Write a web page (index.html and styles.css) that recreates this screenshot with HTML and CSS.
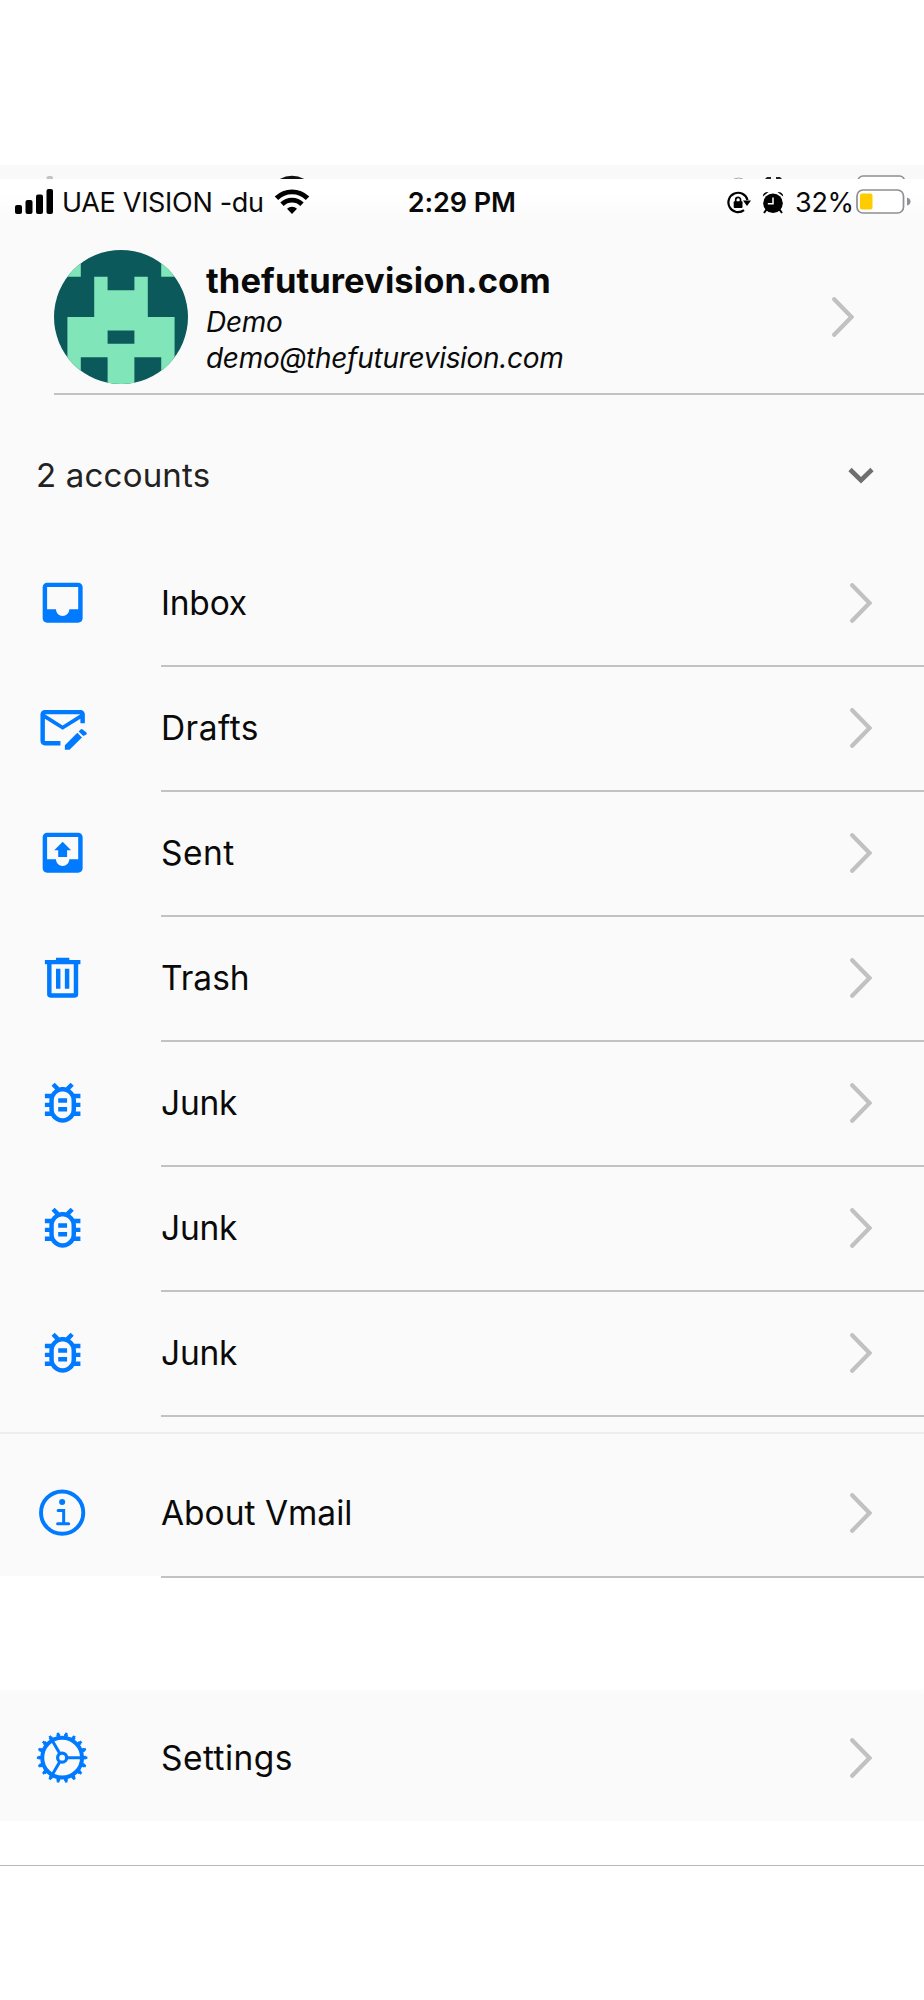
FILE: index.html
```html
<!DOCTYPE html>
<html lang="en">
<head>
<meta charset="utf-8">
<title>Vmail</title>
<link rel="stylesheet" href="styles.css">
</head>
<body>
<svg class="defs" width="0" height="0" aria-hidden="true">
  <defs>
    <symbol id="chevron" viewBox="0 0 22 40"><path d="M2.200 2.200 L19.500 20 L2.200 37.800" fill="none" stroke="#c1c1c1" stroke-width="4.200" stroke-linecap="round" stroke-linejoin="miter"/></symbol>
    <symbol id="bug" viewBox="0 0 24 24"><path d="M20 8h-2.810c-.45-.78-1.070-1.450-1.820-1.960L17 4.410 15.590 3l-2.170 2.170C12.960 5.060 12.490 5 12 5s-.96.06-1.410.17L8.410 3 7 4.410l1.620 1.630C7.880 6.550 7.260 7.220 6.810 8H4v2h2.090c-.05.33-.09.66-.09 1v1H4v2h2v1c0 .34.04.67.09 1H4v2h2.810c1.040 1.790 2.970 3 5.190 3s4.150-1.210 5.190-3H20v-2h-2.090c.05-.33.09-.66.09-1v-1h2v-2h-2v-1c0-.34-.04-.67-.09-1H20V8zm-4 4v3c0 .22-.03.47-.07.7l-.1.65-.37.65c-.72 1.240-2.040 2-3.460 2s-2.740-.77-3.460-2l-.37-.64-.1-.65C8.030 15.480 8 15.230 8 15v-4c0-.23.03-.48.07-.7l.1-.65.37-.65c.3-.52.72-.97 1.210-1.310l.57-.39.74-.18c.31-.08.63-.12.94-.12.32 0 .63.04.95.12l.68.16.61.42c.5.34.91.78 1.210 1.310l.38.65.1.65c.04.22.07.47.07.69v1zm-6 2h4v2h-4zm0-4h4v2h-4z"/></symbol>
  </defs>
</svg>

<div class="strip">
  <svg viewBox="0 0 924 14" width="924" height="14">
    <rect x="46.500" y="11" width="6.500" height="5" rx="2" fill="#c4c4c4"/>
    <path d="M278 15 Q292 6.500 306 15Z" fill="#111"/>
    <path d="M765 14l2-2h4v2zM776 14v-2h4l2 2z" fill="#222"/>
    <path d="M734 14q5-2 9 0" stroke="#aaa" fill="none"/>
    <rect x="858" y="11" width="46.500" height="20" rx="5" fill="#fff" stroke="#8e8e93" stroke-width="1.600"/>
  </svg>
</div>

<header class="status">
  <svg class="signal" viewBox="0 0 38 25" width="38" height="25"><rect x="0" y="16" width="7" height="9" rx="2"/><rect x="10.500" y="11" width="7" height="14" rx="2"/><rect x="21" y="5.500" width="7" height="19.500" rx="2"/><rect x="31.500" y="0" width="6.500" height="25" rx="2"/></svg>
  <span class="carrier">UAE VISION -du</span>
  <svg class="wifi" viewBox="0 0 34 25" width="34" height="25"><g fill="none" stroke="#000" stroke-width="4.800"><path d="M1.500 9.200a22 22 0 0 1 31 0"/><path d="M7 15.200a14.200 14.200 0 0 1 20 0"/></g><path d="M17 25l-5-5.200a7 7 0 0 1 10 0z"/></svg>
  <span class="clock">2:29 PM</span>
  <svg class="lock" viewBox="0 0 24 23" width="24" height="23"><g fill="none" stroke="#000" stroke-width="2.200"><path d="M20.500 9A9.700 9.700 0 1 0 17 19.200"/><path d="M8.700 11V8.700a2.400 2.400 0 0 1 4.800 0V11" stroke-width="1.700"/></g><rect x="6.700" y="10.300" width="8.800" height="6.800" rx="1"/><path d="M16 9.500h8l-4 5.500z"/></svg>
  <svg class="alarm" viewBox="0 0 22 23" width="22" height="23"><circle cx="11" cy="12.200" r="9.800"/><path d="M.8 5.500Q1 .8 6.500 1zM21.200 5.500Q21 .8 15.500 1z"/><path d="M4.500 18.500l-2.500 3.500M17.500 18.500l2.500 3.500" stroke="#000" stroke-width="2"/><path d="M11 6.500v6.200H5.800" fill="none" stroke="#fff" stroke-width="1.500"/></svg>
  <span class="percent">32%</span>
  <svg class="battery" viewBox="0 0 55 25" width="55" height="25"><rect x="1" y="1" width="46.500" height="23" rx="6" fill="#fff" stroke="#8e8e93" stroke-width="1.700"/><rect x="4" y="4.500" width="12.500" height="16" rx="2" fill="#fc0"/><path d="M51 8.500q3.500 1 3.500 4t-3.500 4z" fill="#8e8e93"/></svg>
</header>

<main>
  <section class="profile">
    <svg class="avatar" viewBox="0 0 10 10" width="134" height="134"><clipPath id="round"><circle cx="5" cy="5" r="5"/></clipPath><g clip-path="url(#round)"><path fill="#0b595b" d="M0 0h10v10H0z"/><path fill="#80e5b8" fill-rule="evenodd" d="M0 0h2v2H0zM8 0h2v2H8zM3 2h1v1h2V2h1v3h2v5H8V8H6v2H4V8H2v2H1V5h2zM4 6v1h2V6z"/></g></svg>
    <div class="who">
      <div class="name">thefuturevision.com</div>
      <div class="demo">Demo</div>
      <div class="email">demo@thefuturevision.com</div>
    </div>
    <svg class="go" width="22" height="40"><use href="#chevron"/></svg>
  </section>

  <section class="accounts">
    <span class="count">2 accounts</span>
    <svg width="26" height="17" viewBox="0 0 26 17"><path d="M2 2.500 L13 13.200 L24 2.500" fill="none" stroke="#6f6f6f" stroke-width="4.600"/></svg>
  </section>

  <nav class="folders">
    <a class="row"><svg class="icon" viewBox="0 0 24 24"><path d="M19 3H5c-1.100 0-2 .9-2 2v14c0 1.100.9 2 2 2h14c1.100 0 2-.9 2-2V5c0-1.100-.9-2-2-2zm0 12h-4c0 1.660-1.350 3-3 3s-3-1.340-3-3H5V5h14v10z"/></svg><span class="cell"><span class="snug">Inbox</span><svg class="go" width="22" height="40"><use href="#chevron"/></svg></span></a>
    <a class="row"><svg class="icon" viewBox="0 0 24 24"><path fill-rule="evenodd" d="M11 20H4c-1.100 0-2-.9-2-2V6c0-1.100.9-2 2-2h16c1.100 0 2 .9 2 2v4h-2V8l-8 5-8-5v10h7zM4 6l8 5 8-5z"/><path d="M13 22v-2.100l5.600-5.600 2.100 2.100L15.100 22zM21.300 15.800l-2.100-2.100.9-.9q.4-.4.900 0l1.700 1.400q.4.400 0 .9z"/></svg><span class="cell"><span class="wide">Drafts</span><svg class="go" width="22" height="40"><use href="#chevron"/></svg></span></a>
    <a class="row"><svg class="icon" viewBox="0 0 24 24"><path d="M19 3H5c-1.100 0-2 .9-2 2v14c0 1.100.9 2 2 2h14c1.100 0 2-.9 2-2V5c0-1.100-.9-2-2-2zm0 12h-4c0 1.660-1.350 3-3 3s-3-1.340-3-3H5V5h14v10zM10 14h4v-3.100h1.800L12 7.100l-3.800 3.800H10z"/></svg><span class="cell"><span class="wide">Sent</span><svg class="go" width="22" height="40"><use href="#chevron"/></svg></span></a>
    <a class="row"><svg class="icon" viewBox="0 0 24 24"><path fill-rule="evenodd" d="M4 4h5V3h6v1h5v2h-1v13.500q0 1.500-1.500 1.500h-11Q5 21 5 19.500V6H4zM7 6v13h10V6zM9 8h2v9H9zM13 8h2v9h-2z"/></svg><span class="cell"><span>Trash</span><svg class="go" width="22" height="40"><use href="#chevron"/></svg></span></a>
    <a class="row"><svg class="icon"><use href="#bug"/></svg><span class="cell"><span class="snug">Junk</span><svg class="go" width="22" height="40"><use href="#chevron"/></svg></span></a>
    <a class="row"><svg class="icon"><use href="#bug"/></svg><span class="cell"><span class="snug">Junk</span><svg class="go" width="22" height="40"><use href="#chevron"/></svg></span></a>
    <a class="row"><svg class="icon"><use href="#bug"/></svg><span class="cell"><span class="snug">Junk</span><svg class="go" width="22" height="40"><use href="#chevron"/></svg></span></a>
  </nav>

  <section class="about">
    <a class="row"><svg class="icon" viewBox="0 0 53 53"><g fill="none" stroke="#007aff"><circle cx="26" cy="26.500" r="21" stroke-width="3.900"/><path d="M22 24.300h5.500v13M21.500 37.500h11" stroke-width="3" stroke-linecap="round"/></g><circle cx="26" cy="16" r="3"/></svg><span class="cell"><span>About Vmail</span><svg class="go" width="22" height="40"><use href="#chevron"/></svg></span></a>
  </section>
</main>

<section class="settings">
  <a class="row"><svg class="icon" viewBox="0 0 53 53"><g fill="none" stroke="#007aff"><circle cx="26" cy="26.500" r="19.800" stroke-width="4"/><circle cx="26" cy="26.500" r="22.300" stroke-width="2.600" pathLength="180" stroke-dasharray="4.800 5.200" stroke-dashoffset="2.400"/><circle cx="26" cy="26.500" r="24" stroke-width="2.200" pathLength="180" stroke-dasharray="3 7" stroke-dashoffset="1.500"/><circle cx="26" cy="26.500" r="4.500" stroke-width="3.200"/><path d="M31 26.500h15M23.500 22.200l-7.500-13M23.500 30.800l-7.500 13" stroke-width="3"/></g></svg><span class="cell"><span class="wide">Settings</span><svg class="go" width="22" height="40"><use href="#chevron"/></svg></span></a>
</section>
<footer class="end"></footer>
</body>
</html>
```

FILE: styles.css
```css
* { box-sizing: border-box; }
body {
  margin: 0;
  padding-top: 165px;
  width: 924px;
  height: 2000px;
  background: #fff;
  color: #0a0a0a;
  font-family: Inter, "Liberation Sans", sans-serif;
}
svg { display: block; flex: none; }
span, .who div { white-space: nowrap; }
.defs { position: absolute; }
.strip { height: 14px; background: #f9f9f9; overflow: hidden; }
.status {
  height: 46px;
  padding: 0 13px 0 15px;
  display: flex;
  align-items: flex-start;
  background: linear-gradient(#fff 25%, #fafafa);
  font-size: 27px;
  line-height: 47px;
}
.status svg { margin-top: 10px; }
.carrier { width: 212px; padding-left: 8px; margin-left: 1px; letter-spacing: -0.3px; }
.wifi { margin-left: 9px; }
.clock { width: 420px; padding-left: 99px; font-weight: 600; letter-spacing: -0.05px; }
.status .lock { margin-top: 12px; margin-left: -1px; }
.status .alarm { margin-top: 12px; margin-left: 11px; }
.percent { width: 61px; margin-left: 11px; letter-spacing: -0.4px; }
main { height: 1351px; background: #fafafa; }
.profile {
  height: 170px;
  margin-left: 54px;
  padding-right: 70px;
  display: flex;
  align-items: flex-start;
  border-bottom: 2px solid #c2c2c2;
}
.profile .avatar { margin-top: 25px; }
.profile .go { margin: 72px 0 0 auto; }
.who { padding: 34px 0 0 18px; }
.name { font-size: 34.5px; line-height: 44px; font-weight: 700; letter-spacing: 0.1px; }
.demo, .email { font-size: 28px; line-height: 36px; font-style: italic; letter-spacing: -0.3px; }
.demo { margin-top: 1px; }
.accounts {
  height: 147px;
  padding: 13px 50px 0 36px;
  display: flex;
  align-items: center;
  justify-content: space-between;
}
.count { font-size: 33px; letter-spacing: 0.2px; color: #222; }
.row { display: flex; align-items: stretch; height: 125px; padding-left: 36px; }
.icon { width: 53.3px; height: 53.3px; margin-top: 33.7px; fill: #007aff; }
.cell {
  flex: 1;
  margin-left: 71.7px;
  padding: 0 52px 2px 0;
  display: flex;
  align-items: center;
  justify-content: space-between;
  border-bottom: 2px solid #c2c2c2;
  font-size: 33.5px;
}
.wide { letter-spacing: 0.45px; }
.snug { letter-spacing: -0.2px; }
.about { margin-top: 15px; padding-top: 18px; border-top: 2px solid #eee; }
.about .row { height: 126px; }
.settings {
  height: 132px;
  margin-top: 113px;
  padding-top: 8px;
  background: linear-gradient(#fdfdfd, #fafafa 6px);
}
.settings .cell { border-bottom-color: transparent; }
.end { margin-top: 44px; border-top: 1px solid #b8b8b8; }
```
